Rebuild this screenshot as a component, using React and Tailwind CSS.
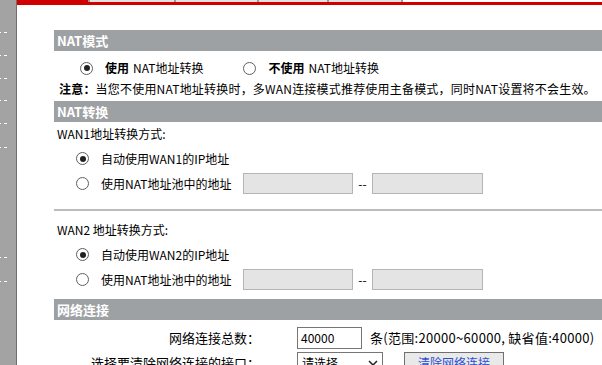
import React from "react";

const FONT = { fontFamily: '"Microsoft YaHei", "Noto Sans CJK SC", "Noto Sans", sans-serif' };

const Radio = ({ checked }) => (
  <span className="inline-flex w-[13px] h-[13px] rounded-full border border-[#5f5f5f] bg-white items-center justify-center shrink-0">
    {checked && <span className="w-[6px] h-[6px] rounded-full bg-[#222]" />}
  </span>
);

const SectionHead = ({ title, className = "" }) => (
  <div
    className={
      "h-[21px] bg-[#9ea1a3] text-white font-bold text-[13px] leading-[21px] pl-[3px] " +
      className
    }
  >
    {title}
  </div>
);

const GrayInput = ({ w }) => (
  <div className="h-[21px] bg-[#e4e4e4] border border-[#b5b5b5]" style={{ width: w }} />
);

const WanBlock = ({ title, wan }) => (
  <div className="text-[12px]">
    <div className="h-[24px] leading-[24px] pl-[3px]">{title}</div>
    <div className="h-[25px] flex items-center pl-[22px]">
      <Radio checked />
      <span className="ml-[12px] whitespace-nowrap">自动使用{wan}的IP地址</span>
    </div>
    <div className="h-[25px] flex items-center pl-[22px]">
      <Radio />
      <span className="ml-[12px] w-[142px] whitespace-nowrap">使用NAT地址池中的地址</span>
      <GrayInput w={110} />
      <span className="w-[19px] text-center">--</span>
      <GrayInput w={111} />
    </div>
  </div>
);

const dashes = [32, 23, 23, 22, 23, 24, 110, 24];

const Sidebar = () => (
  <div className="w-[17px] shrink-0 bg-[#a3a3a3] border-r border-[#6e6e6e] flex flex-col">
    {dashes.map((d, i) => (
      <div key={i} className="flex gap-[3px]" style={{ marginTop: i === 0 ? d : d - 1 }}>
        <span className="w-[1px] h-[1px] bg-white" />
        <span className="w-[3px] h-[1px] bg-white" />
      </div>
    ))}
  </div>
);

const TopBar = () => (
  <div className="flex h-[5px]">
    <div className="w-[71px] bg-[#d00000]" />
    <div className="flex-1 flex flex-col">
      <div className="h-[2px] flex">
        <div className="w-[86px] bg-[#e2e2e2] border-l-2 border-[#9a9a9a]" />
        <div className="w-[83px] bg-[#e2e2e2] border-l-2 border-[#9a9a9a]" />
        <div className="w-[70px] bg-[#e2e2e2] border-l-2 border-[#9a9a9a]" />
        <div className="w-[76px] bg-[#e2e2e2] border-l-2 border-[#9a9a9a] border-r-2" />
        <div className="flex-1 bg-white" />
      </div>
      <div className="h-[3px] bg-[#d00000]" />
    </div>
  </div>
);

export default function App() {
  return (
    <div className="w-[602px] h-[365px] overflow-hidden flex bg-white text-[13px] text-black" style={FONT}>
      <Sidebar />
      <div className="flex-1 flex flex-col">
        <TopBar />
        <div className="pl-[37px] pt-[25px]">
          <SectionHead title="NAT模式" />
          <div className="mt-[5px] h-[24px] flex items-center text-[12px]">
            <span className="w-[26px]" />
            <Radio checked />
            <span className="ml-[12px] font-bold">使用</span>
            <span className="ml-[4px]">NAT地址转换</span>
            <span className="w-[40px]" />
            <Radio />
            <span className="ml-[12px] font-bold">不使用</span>
            <span className="ml-[4px]">NAT地址转换</span>
          </div>
          <div className="h-[17px] leading-[17px] pl-[5px] whitespace-nowrap text-[12px] tracking-[0.2px]">
            <span className="font-bold">注意：</span>
            当您不使用NAT地址转换时，多WAN连接模式推荐使用主备模式，同时NAT设置将不会生效。
          </div>
          <SectionHead title="NAT转换" className="mt-[4px]" />
          <WanBlock title="WAN1地址转换方式:" wan="WAN1" />
          <div className="mt-[13px] h-[2px] bg-[#bcbcbc]" />
          <div className="mt-[7px]">
            <WanBlock title="WAN2 地址转换方式:" wan="WAN2" />
          </div>
          <SectionHead title="网络连接" className="mt-[7px]" />
          <div className="mt-[7px] h-[22px] flex items-center">
            <div className="w-[206px] text-right whitespace-nowrap">网络连接总数：</div>
            <div className="ml-[37px] w-[65px] h-[22px] border border-[#767676] pl-[3px] leading-[20px] text-[12px]">
              40000
            </div>
            <span className="ml-[8px] whitespace-nowrap tracking-[0.3px]">条(范围:20000~60000, 缺省值:40000)</span>
          </div>
          <div className="mt-[3px] h-[22px] flex items-center">
            <div className="w-[206px] text-right whitespace-nowrap">选择要清除网络连接的接口：</div>
            <div className="ml-[37px] w-[86px] h-[22px] border border-[#767676] flex items-center justify-between px-[4px]">
              <span className="text-[12px]">请选择</span>
              <svg width="10" height="7" viewBox="0 0 10 7">
                <path d="M1 1l4 4 4-4" fill="none" stroke="#222" strokeWidth="1.5" />
              </svg>
            </div>
            <div className="ml-[21px] w-[100px] h-[22px] border border-[#707070] bg-[#e9e9e9] text-[#3050d0] text-center leading-[20px] text-[12px]">
              清除网络连接
            </div>
          </div>
        </div>
      </div>
    </div>
  );
}
